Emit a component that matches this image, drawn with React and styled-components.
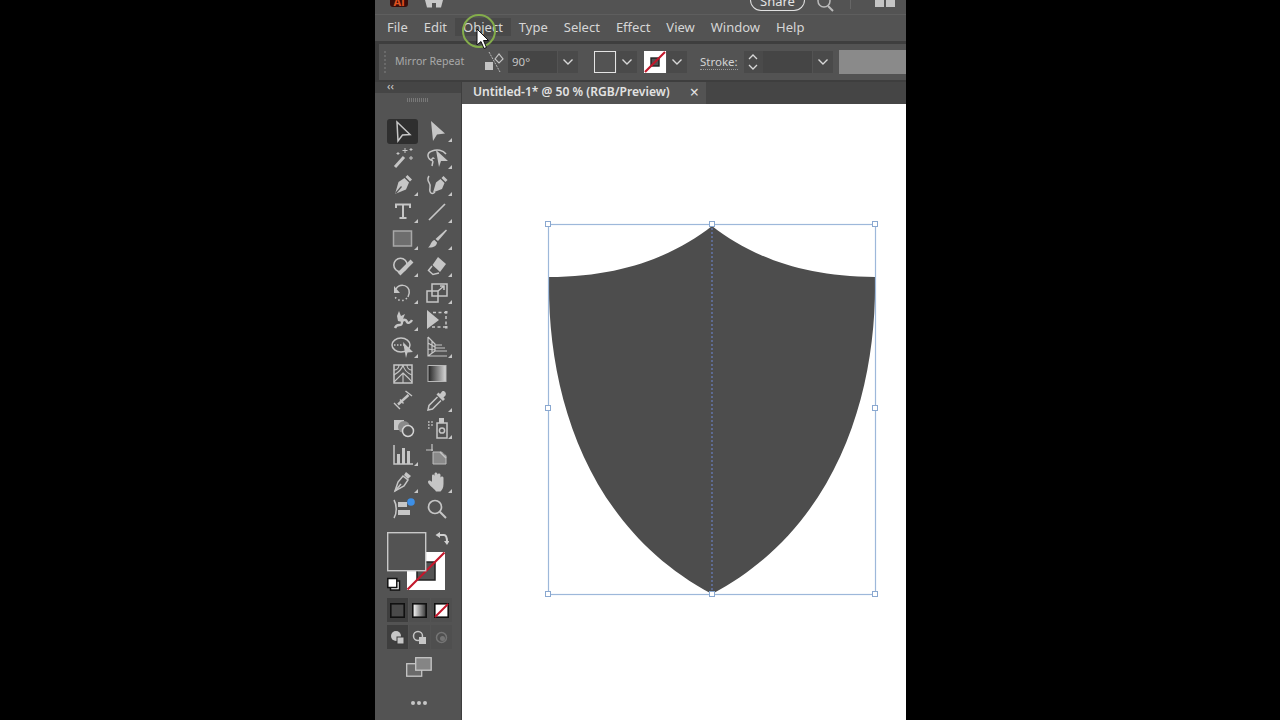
import React from 'react'
import styled, { createGlobalStyle } from 'styled-components'

const Global = createGlobalStyle`
html,body{margin:0;padding:0;background:#000;height:100%;overflow:hidden;}
#root{height:100%;}
*{box-sizing:border-box;}
`

const s = { fill: 'none', stroke: '#c6c6c6', strokeWidth: 1.5 }
const f = { fill: '#c6c6c6' }

const TOOLS = [
  { name: 'select', art: <path {...s} d="M6 2L19 14.5 11.5 15 7 21Z" /> },
  { name: 'direct', more: true, art: <path {...f} d="M6 2L20 14.5 12 15.5 8 22Z" /> },
  { name: 'wand', art: <g><path d="M4 21L13 11" stroke="#c6c6c6" strokeWidth="3" /><path {...s} strokeWidth="1" d="M14 2V7M11.5 4.5H16.5M20 2V5M18.5 3.5H21.5M20 10V14M18 12H22M7 6V9M5.5 7.5H8.5" /></g> },
  { name: 'lasso', more: true, art: <g><path {...s} d="M8 15C2 13 1 7 7 5 12 3 18 4 21 8M8 15L7 20M7 15C6 12 9 11 9 13" /><path {...f} d="M11 4L23 15 16 15 14 21Z" /></g> },
  { name: 'pen', more: true, art: <g><path {...f} d="M16.5 2L21 6.5 19 8.5 14.5 4ZM13.5 5L18 9.5 15 16.5 4 21 7.5 9Z" /><path d="M4.5 20.5L10.5 13.5" stroke="#535353" strokeWidth="1.2" /></g> },
  { name: 'curvature', more: true, art: <g><path {...f} d="M18.5 3L22.5 7 20.5 9 16.5 5ZM15.5 6L19.5 10 17 16 8 19.5 11 9.5Z" /><path {...s} d="M4 3C0 9 7 9 5 15 4 20 7 22 10 19" /></g> },
  { name: 'type', more: true, art: <path {...s} strokeWidth="2" d="M5 8V4.5H19V8M12 4.5V18M8.5 18H15.5" /> },
  { name: 'line', more: true, art: <path {...s} strokeWidth="1.7" d="M4 20L20 4" /> },
  { name: 'rect', more: true, art: <rect x="2.5" y="4" width="18" height="15" fill="#6e6e6e" stroke="#a8a8a8" strokeWidth="1.5" /> },
  { name: 'brush', more: true, art: <path {...f} d="M21 2.5L22 3.5 13 14 10.5 12ZM9.5 13L12 15.5C12 19 8 21 3 20.5 6 19 5.5 14 9.5 13Z" /> },
  { name: 'shaper', more: true, art: <g><circle cx="9.5" cy="11" r="6.7" {...s} strokeWidth="1.6" /><path d="M8 20L21 7" stroke="#c6c6c6" strokeWidth="4" /></g> },
  { name: 'eraser', more: true, art: <g><path {...f} d="M13 3L21 10 15 18 7.5 11Z" /><path {...s} d="M7 12L3.5 16.5 8 20.5 14 19" /></g> },
  { name: 'rotate', more: true, art: <g><path {...s} d="M5 8C8 3 16 3 18 9 19 12 18 14 17 16" /><path {...f} d="M3 5L9 12 3 12Z" /><path {...s} strokeDasharray="1.5 2.5" d="M16 17C12 21 7 20 4 16" /></g> },
  { name: 'scale', more: true, art: <g><rect x="7" y="3" width="15" height="12" {...s} /><rect x="2" y="10" width="11" height="11" {...s} /><path {...s} d="M13 10L19 5M15 5H19V9" /></g> },
  { name: 'warp', more: true, art: <g><path {...s} strokeWidth="2.4" d="M4 20C6 14 11 20 11 14 11 11 15 11 16 14 17 16 20 14 21 12" /><path {...f} d="M8 3L10 8 14 6 12 11 16 12 11 14 7 13 6 8Z" /></g> },
  { name: 'free', art: <g><path {...s} strokeDasharray="3 2.5" d="M8 4.5H21V19H6" /><path {...f} d="M2 2L14 12 2 21Z" /><path {...f} d="M20 3h2.5v2.5H20zM20 18h2.5v2.5H20z" /></g> },
  { name: 'builder', more: true, art: <g><ellipse cx="10" cy="10" rx="9" ry="7" {...s} /><path {...s} strokeDasharray="1.5 1.5" d="M3 10H15" /><path {...f} d="M12 7L22 17 16.5 17.5 15 23Z" /></g> },
  { name: 'perspective', more: true, art: <g><path {...s} strokeWidth="1.2" d="M3 2V21H22M3 2L10 9V16M3 8L10 12M3 14L10 15M3 21L10 16M7 6V18" /><path {...s} strokeWidth="1.2" d="M10 10H17M10 13H20M10 16H22" /></g> },
  { name: 'mesh', art: <g><rect x="3" y="3" width="18" height="18" {...s} /><path {...s} strokeWidth="1.1" d="M3 13C8 10 11 7 12 3M3 8C6 8 8 6 8 3M21 13C16 11 13 8 12 3M3 20C7 16 10 13 12 11 14 13 18 16 21 20M12 11V21M21 8C18 8 16 6 16 3" /></g> },
  { name: 'gradient', art: <g><defs><linearGradient id="toolGrad"><stop offset="0" stopColor="#222" /><stop offset="1" stopColor="#d8d8d8" /></linearGradient></defs><rect x="3" y="3.5" width="18" height="16" fill="url(#toolGrad)" stroke="#b8b8b8" /></g> },
  { name: 'measure', art: <g><path {...s} strokeWidth="1.4" d="M14.500 2L21 7M3 14L9 20" /><path {...s} strokeWidth="2.4" d="M7 15.500L17.500 6" /><path {...s} strokeWidth="1.4" d="M9 10.500L12.500 14.500" /></g> },
  { name: 'dropper', more: true, art: <g><path {...f} d="M17 2.5C19 1 22 4 20.5 6.5L18.5 8.5 20 10 18 12 11.5 5.5 13.5 3.5 15 5Z" /><path {...s} d="M12.5 8L4 16.5 3 21 7.5 20 16 11.5" /></g> },
  { name: 'blend', art: <g><rect x="3" y="4" width="10" height="10" {...f} /><circle cx="13" cy="11" r="6" fill="#8a8a8a" /><circle cx="17" cy="15" r="5.5" fill="#535353" stroke="#d4d4d4" strokeWidth="1.500" /></g> },
  { name: 'sprayer', more: true, art: <g><path {...s} strokeDasharray="1.6 1.6" d="M3 6H9M3 9H9M3 12H6" /><rect x="12" y="7" width="10" height="15" {...s} /><rect x="14" y="2" width="5" height="5" {...f} /><circle cx="17" cy="14.5" r="2.6" {...s} /></g> },
  { name: 'graph', more: true, art: <g><path {...s} d="M3 2V21H22" /><path {...f} d="M6 11H9V21H6ZM11 5H14V21H11ZM16 8H19V21H16Z" /></g> },
  { name: 'artboard', art: <g><path d="M8 9H21V21H8Z" fill="#8a8a8a" stroke="#bdbdbd" /><path {...s} strokeWidth="1.2" d="M1 7H8M7 1V8" /><path fill="#535353" d="M16 8H22V13Z" /><path {...s} d="M15 9L21 15" /></g> },
  { name: 'slice', more: true, art: <g><path {...f} d="M15 2L20 6 17 9 13 5Z" /><path {...s} d="M12 6L17 10 13 16 4 21 7 12Z" /><path {...s} d="M4 21L10 14" /></g> },
  { name: 'hand', more: true, art: <path {...f} d="M10 20C7 17 3 14 3 12 3 10 5.500 10 7 12L7 6C7 4 9 4 9.500 6V4C9.500 2 12 2 12.500 4V5C12.500 3 15.500 3 15.500 5V8C15.500 6 18.500 6 18.500 8V14C18.500 18 17 20 15.500 21.500H11Z" /> },
  { name: 'edit', art: <g><path {...s} d="M3 3C6 8 6 16 3 21" /><path {...f} d="M7 5H16V10H7ZM7 13H19V18H7Z" /><circle cx="20" cy="5" r="3.800" fill="#3d8fe6" /></g> },
  { name: 'zoom', art: <g><circle cx="10" cy="10" r="6.500" {...s} strokeWidth="1.7" /><path {...s} strokeWidth="2" d="M14.800 14.800L21 21" /></g> },
]

const Toolbar = () => (
  <ToolGrid>
    {TOOLS.map((t) => (
      <Tool key={t.name} $active={t.name === 'select'} $more={t.more}>
        <svg width="24" height="24" viewBox="0 0 24 24">{t.art}</svg>
      </Tool>
    ))}
  </ToolGrid>
)

const menu = ['File', 'Edit', 'Object', 'Type', 'Select', 'Effect', 'View', 'Window', 'Help']

const Chevron = () => (
  <svg width="12" height="8" viewBox="0 0 12 8"><path d="M1.500 1.500L6 6l4.500-4.500" fill="none" stroke="#d8d8d8" strokeWidth="1.400" /></svg>
)

const SlashSwatch = () => (
  <svg width="22" height="22" viewBox="0 0 22 22">
    <rect width="22" height="22" fill="#fff" />
    <rect x="7" y="7" width="8" height="8" fill="#535353" stroke="#222" strokeWidth="1.400" />
    <path d="M1 21L21 1" stroke="#c3172b" strokeWidth="2.200" />
  </svg>
)

export default function App() {
  return (
    <Page>
      <Global />
      <Window>
        <TitleBar>
          <Brand>
            <AiLogo>Ai</AiLogo>
            <svg width="18" height="8" viewBox="0 0 18 8"><path fill="#c8c8c8" d="M0 0H7V7.500H2ZM11 0H18L16 7.500H11ZM7 0H11V3H7Z" /></svg>
          </Brand>
          <TitleRight>
            <ShareButton>Share</ShareButton>
            <svg width="18" height="15" viewBox="0 0 18 15"><path d="M11 6L16 11" stroke="#bbb" strokeWidth="2" /><circle cx="7" cy="1" r="6" fill="none" stroke="#bbb" strokeWidth="1.500" /></svg>
            <TitleDivider />
            <svg width="20" height="15" viewBox="0 0 20 15"><path fill="#c4c4c4" d="M0 0H9V7H0ZM11 0H20V7H11Z" /></svg>
          </TitleRight>
        </TitleBar>
        <MenuBar>
          {menu.map((m) => <MenuItem key={m} $hover={m === 'Object'}>{m}</MenuItem>)}
        </MenuBar>
        <OptionsBar>
          <Grip />
          <OptionLabel>Mirror Repeat</OptionLabel>
          <ReflectIcon>
            <svg width="22" height="22" viewBox="0 0 22 22">
              <path d="M2 11H10V19H2Z" fill="#c4c4c4" />
              <path d="M12 8L16 3 20 8 16 12Z" fill="none" stroke="#c4c4c4" strokeWidth="1.200" />
              <path d="M6 1L17 21" stroke="#bbb" strokeWidth="1" strokeDasharray="2 1" />
            </svg>
          </ReflectIcon>
          <Field $w={49}>90°</Field>
          <DropBtn><Chevron /></DropBtn>
          <FillSwatch />
          <DropBtn><Chevron /></DropBtn>
          <StrokeSwatch><SlashSwatch /></StrokeSwatch>
          <DropBtn><Chevron /></DropBtn>
          <StrokeLabel>Stroke:</StrokeLabel>
          <Spinner>
            <svg width="12" height="18" viewBox="0 0 12 18"><path d="M2 6l4-4 4 4M2 12l4 4 4-4" fill="none" stroke="#d8d8d8" strokeWidth="1.300" /></svg>
          </Spinner>
          <Field $w={49} />
          <DropBtn><Chevron /></DropBtn>
          <GrayBlock />
        </OptionsBar>
        <Workspace>
          <LeftPanel>
            <PanelHead>‹‹</PanelHead>
            <GripH />
            <Toolbar />
            <ColorWell>
              <svg width="62" height="62" viewBox="0 0 62 62">
                <g transform="translate(20 20)">
                  <rect width="38" height="38" fill="#fff" />
                  <rect x="10" y="10" width="18" height="18" fill="#535353" stroke="#222" strokeWidth="1.500" />
                  <path d="M0.500 37.500L37.500 0.500" stroke="#c3172b" strokeWidth="2.200" />
                </g>
                <rect x="0.700" y="0.700" width="38" height="38" fill="#535353" stroke="#c8c8c8" strokeWidth="1.400" />
                <rect x="3.500" y="49" width="9" height="9" fill="#fff" stroke="#111" strokeWidth="1.500" />
                <rect x="0.800" y="46.500" width="9" height="9" fill="#fff" stroke="#111" strokeWidth="1.500" />
              </svg>
              <SwapIcon>
                <svg width="14" height="14" viewBox="0 0 14 14"><path d="M3 3H9C11 3 12 5 12 10" fill="none" stroke="#d0d0d0" strokeWidth="2" /><path d="M5 0L0.500 3 5 6ZM9 9H14.500L12 13Z" fill="#d0d0d0" /></svg>
              </SwapIcon>
            </ColorWell>
            <ModeRow>
              <ModeBtn $on>
                <svg width="15" height="15" viewBox="0 0 15 15"><rect x="0.800" y="0.800" width="13.400" height="13.400" fill="#4a4a4a" stroke="#111" strokeWidth="1.600" /></svg>
              </ModeBtn>
              <ModeBtn>
                <svg width="15" height="15" viewBox="0 0 15 15"><defs><linearGradient id="modeGrad"><stop offset="0" stopColor="#fff" /><stop offset="1" stopColor="#333" /></linearGradient></defs><rect x="0.800" y="0.800" width="13.400" height="13.400" fill="url(#modeGrad)" stroke="#111" strokeWidth="1.600" /></svg>
              </ModeBtn>
              <ModeBtn>
                <svg width="15" height="15" viewBox="0 0 15 15"><rect x="0.800" y="0.800" width="13.400" height="13.400" fill="#fff" stroke="#111" strokeWidth="1.600" /><path d="M1 14L14 1" stroke="#c3172b" strokeWidth="2" /></svg>
              </ModeBtn>
            </ModeRow>
            <ModeRow $tight>
              <ModeBtn $on>
                <svg width="15" height="15" viewBox="0 0 15 15"><circle cx="6" cy="6" r="5" fill="#c6c6c6" /><rect x="7" y="7" width="7" height="7" fill="#c6c6c6" stroke="#3a3a3a" /></svg>
              </ModeBtn>
              <ModeBtn>
                <svg width="15" height="15" viewBox="0 0 15 15"><circle cx="6" cy="6" r="4.500" fill="none" stroke="#c6c6c6" strokeWidth="1.500" /><rect x="7" y="7" width="7" height="7" fill="#c6c6c6" /></svg>
              </ModeBtn>
              <ModeBtn>
                <svg width="15" height="15" viewBox="0 0 15 15"><circle cx="7.500" cy="7.500" r="5" fill="none" stroke="#757575" strokeWidth="1.500" /><circle cx="8.500" cy="8.500" r="2.500" fill="#757575" /></svg>
              </ModeBtn>
            </ModeRow>
            <ScreenMode>
              <svg width="26" height="20" viewBox="0 0 26 20">
                <rect x="0.700" y="6.700" width="15" height="12.500" fill="#6a6a6a" stroke="#c6c6c6" strokeWidth="1.300" />
                <rect x="9.700" y="0.700" width="15.500" height="12.500" fill="#858585" stroke="#c6c6c6" strokeWidth="1.300" />
              </svg>
            </ScreenMode>
            <MoreDots><i /><i /><i /></MoreDots>
          </LeftPanel>
          <DocArea>
            <TabRow>
              <Tab>
                <TabTitle>Untitled-1* @ 50 % (RGB/Preview)</TabTitle>
                <TabClose>×</TabClose>
              </Tab>
            </TabRow>
            <Canvas>
              <svg width="444" height="616" viewBox="462 104 444 616">
                <path fill="#4d4d4d" d="M712 226C676 254 625 277 549 277C547 385 582 525 712 594C842 525 877 385 875 277C799 277 748 254 712 226Z" />
                <rect x="548.500" y="224.500" width="327" height="370" fill="none" stroke="#9db8da" strokeWidth="1.200" />
                <path d="M712 224V594" stroke="#6a80c0" strokeWidth="1.200" strokeDasharray="2 2" />
                {[548, 712, 875].flatMap((x) => [224, 408, 594].map((y) => (
                  (x === 712 && y === 408) ? null :
                    <rect key={x + '-' + y} x={x - 2.500} y={y - 2.500} width="5" height="5" fill="#fff" stroke="#8aa8d0" strokeWidth="1" />
                )))}
              </svg>
            </Canvas>
          </DocArea>
        </Workspace>
        <ClickRing />
        <Cursor>
          <svg width="14" height="22" viewBox="0 0 14 22"><path d="M1 1V17L5 13.500 8 20.500 10.500 19.500 7.500 12.500H12.500Z" fill="#fff" stroke="#111" strokeWidth="1" /></svg>
        </Cursor>
      </Window>
    </Page>
  )
}

const Page = styled.div`
height:720px;
padding-left:375px;
background:#000;
font-family:"Noto Sans","Open Sans",sans-serif;
`

const Window = styled.div`
position:relative;
width:531px;
height:720px;
display:flex;
flex-direction:column;
overflow:hidden;
background:#3e3e3e;
color:#d8d8d8;
`

const TitleBar = styled.div`
height:15px;
flex:none;
background:#535353;
display:flex;
justify-content:space-between;
overflow:hidden;
border-bottom:1px solid #5e5e5e;
padding:0 11px 0 15px;
`

const Brand = styled.div`
display:flex;
gap:17px;
align-items:flex-start;
`

const AiLogo = styled.div`
width:18px;
height:7px;
background:#3a0d0a;
border-radius:0 0 3px 3px;
font-size:11px;
font-weight:700;
line-height:3px;
text-align:center;
color:#e0521f;
overflow:hidden;
`

const TitleRight = styled.div`
display:flex;
align-items:flex-start;
`

const ShareButton = styled.div`
width:55px;
height:11px;
margin-right:12px;
border:1.500px solid #e0e0e0;
border-top:none;
border-radius:0 0 12px 12px;
font-size:13px;
line-height:3px;
color:#e4e4e4;
text-align:center;
`

const TitleDivider = styled.div`
width:1px;
height:9px;
margin:0 24px 0 15px;
background:#666;
`

const MenuBar = styled.div`
height:26px;
flex:none;
display:flex;
align-items:center;
padding:0 0 2px 4px;
background:#535353;
`

const MenuItem = styled.div`
font-size:13px;
line-height:18px;
padding:0 8px;
color:#d6d6d6;
background:${(p) => (p.$hover ? '#494949' : 'transparent')};
`

const OptionsBar = styled.div`
height:36px;
flex:none;
margin:3px 0 2px 4px;
display:flex;
align-items:center;
background:#535353;
`

const Grip = styled.div`
width:3px;
height:22px;
margin:0 0 0 5px;
border-left:2px dotted #6a6a6a;
`

const OptionLabel = styled.div`
font-size:10.600px;
color:#a9a9a9;
margin-left:8px;
padding-bottom:2px;
width:88px;
white-space:nowrap;
`

const ReflectIcon = styled.div`
width:22px;
height:22px;
margin-right:3px;
`

const Field = styled.div`
width:${(p) => p.$w}px;
height:22px;
background:#454545;
font-size:11.500px;
line-height:22px;
padding-left:4px;
color:#c4c4c4;
`

const DropBtn = styled.div`
width:20px;
height:22px;
margin-left:1px;
background:#4a4a4a;
display:flex;
align-items:center;
justify-content:center;
`

const FillSwatch = styled.div`
width:22px;
height:22px;
margin-left:16px;
border:1.500px solid #e4e4e4;
background:#535353;
`

const StrokeSwatch = styled.div`
width:22px;
height:22px;
margin-left:7px;
`

const StrokeLabel = styled.div`
margin-left:13px;
font-size:11.500px;
color:#d4d4d4;
border-bottom:1px dotted #999;
line-height:15px;
`

const Spinner = styled.div`
width:19px;
height:22px;
margin:0 0 0 6px;
background:#4a4a4a;
display:flex;
align-items:center;
justify-content:center;
`

const GrayBlock = styled.div`
flex:1;
height:24px;
margin-left:6px;
background:#8a8a8a;
`

const Workspace = styled.div`
flex:1;
display:flex;
min-height:0;
`

const LeftPanel = styled.div`
width:86px;
flex:none;
display:flex;
flex-direction:column;
background:#535353;
`

const PanelHead = styled.div`
height:11px;
background:#454545;
font-size:11px;
line-height:8px;
padding-left:12px;
color:#cfcfcf;
`

const GripH = styled.div`
width:22px;
height:4px;
margin:5px 0 0 32px;
background:repeating-linear-gradient(90deg,#787878 0 1px,transparent 1px 2px);
`

const ToolGrid = styled.div`
display:grid;
grid-template-columns:34px 34px;
grid-auto-rows:27px;
margin:15px 0 0 11px;
`

const Tool = styled.div`
position:relative;
display:flex;
align-items:center;
justify-content:center;
background:${(p) => (p.$active ? '#2f2f2f' : 'transparent')};
border-radius:3px;
margin:${(p) => (p.$active ? '2px 2px 0 1px' : '0')};
&::after{
  content:"";
  display:${(p) => (p.$more ? 'block' : 'none')};
  position:absolute;
  right:2px;
  bottom:2px;
  border-style:solid;
  border-width:0 0 4px 4px;
  border-color:transparent transparent #c6c6c6 transparent;
}
`

const ColorWell = styled.div`
position:relative;
height:62px;
margin:10px 0 0 12px;
`

const SwapIcon = styled.div`
position:absolute;
left:48px;
top:-3px;
`

const ModeRow = styled.div`
display:flex;
gap:1px;
margin:${(p) => (p.$tight ? '3px' : '4px')} 0 0 12px;
`

const ModeBtn = styled.div`
width:21px;
height:24px;
display:flex;
align-items:center;
justify-content:center;
background:${(p) => (p.$on ? '#3e3e3e' : '#4f4f4f')};
`

const ScreenMode = styled.div`
display:flex;
justify-content:center;
margin-top:8px;
padding-left:2px;
`

const MoreDots = styled.div`
display:flex;
justify-content:center;
gap:2px;
margin-top:24px;
padding-left:2px;
i{
  width:4px;
  height:4px;
  border-radius:50%;
  background:#c6c6c6;
}
`

const DocArea = styled.div`
flex:1;
min-width:0;
display:flex;
flex-direction:column;
margin-left:1px;
`

const TabRow = styled.div`
height:22px;
flex:none;
background:#454545;
`

const Tab = styled.div`
width:244px;
height:22px;
background:#535353;
display:flex;
align-items:center;
justify-content:space-between;
padding:0 7px 3px 11px;
`

const TabTitle = styled.div`
font-size:12.100px;
font-weight:600;
color:#e2e2e2;
white-space:nowrap;
`

const TabClose = styled.div`
font-size:16px;
line-height:20px;
color:#e2e2e2;
`

const Canvas = styled.div`
flex:1;
background:#fff;
`

const ClickRing = styled.div`
position:absolute;
left:87px;
top:14px;
width:34px;
height:34px;
border-radius:50%;
border:2px solid #84ad4b;
`

const Cursor = styled.div`
position:absolute;
left:101px;
top:28px;
`
